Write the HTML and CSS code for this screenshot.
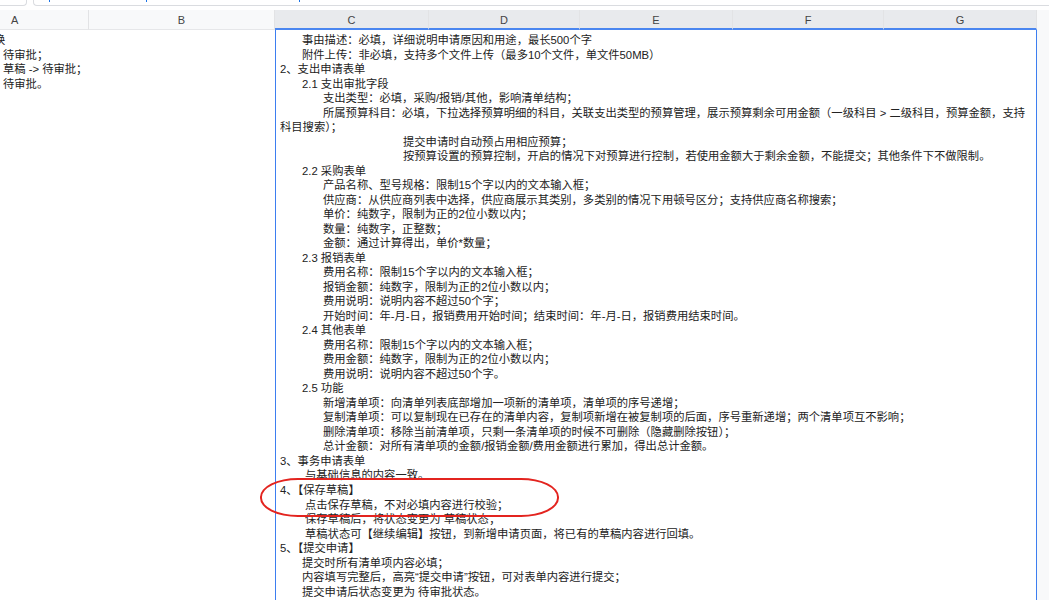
FILE: index.html
```html
<!DOCTYPE html>
<html lang="zh-CN">
<head>
    <meta charset="UTF-8">
    <meta name="viewport" content="width=device-width, initial-scale=1.0">
    <title>需求文档</title>
    <link rel="stylesheet" href="styles.css">
</head>
<body>
    <div class="topbar">
        <div class="namebox"></div>
        <div class="formula">
            <i class="tick t1"></i>
            <i class="tick t2"></i>
            <i class="tick t3"></i>
        </div>
    </div>

    <div class="heads">
        <div class="head head-a">A</div>
        <div class="head">B</div>
        <div class="head sel">C</div>
        <div class="head sel">D</div>
        <div class="head sel">E</div>
        <div class="head sel">F</div>
        <div class="head sel">G</div>
        <div class="head-rest"></div>
    </div>

    <div class="sheet">
        <div class="col-ab">
            <div class="ln"><span class="cut">换</span></div>
            <div class="ln">待审批；</div>
            <div class="ln">草稿 -&gt; 待审批；</div>
            <div class="ln">待审批。</div>
        </div>

        <div class="cell">
            <div class="ln l1">事由描述：必填，详细说明申请原因和用途，最长500个字</div>
            <div class="ln l1">附件上传：非必填，支持多个文件上传（最多10个文件，单文件50MB）</div>
            <div class="ln">2、支出申请表单</div>
            <div class="ln l1">2.1 支出审批字段</div>
            <div class="ln l2">支出类型：必填，采购/报销/其他，影响清单结构；</div>
            <div class="ln l2">所属预算科目：必填，下拉选择预算明细的科目，关联支出类型的预算管理，展示预算剩余可用金额（一级科目 &gt; 二级科目，预算金额，支持</div>
            <div class="ln">科目搜索）；</div>
            <div class="ln l3">提交申请时自动预占用相应预算；</div>
            <div class="ln l3">按预算设置的预算控制，开启的情况下对预算进行控制，若使用金额大于剩余金额，不能提交；其他条件下不做限制。</div>
            <div class="ln l1">2.2 采购表单</div>
            <div class="ln l2">产品名称、型号规格：限制15个字以内的文本输入框；</div>
            <div class="ln l2">供应商：从供应商列表中选择，供应商展示其类别，多类别的情况下用顿号区分；支持供应商名称搜索；</div>
            <div class="ln l2">单价：纯数字，限制为正的2位小数以内；</div>
            <div class="ln l2">数量：纯数字，正整数；</div>
            <div class="ln l2">金额：通过计算得出，单价*数量；</div>
            <div class="ln l1">2.3 报销表单</div>
            <div class="ln l2">费用名称：限制15个字以内的文本输入框；</div>
            <div class="ln l2">报销金额：纯数字，限制为正的2位小数以内；</div>
            <div class="ln l2">费用说明：说明内容不超过50个字；</div>
            <div class="ln l2">开始时间：年-月-日，报销费用开始时间；结束时间：年-月-日，报销费用结束时间。</div>
            <div class="ln l1">2.4 其他表单</div>
            <div class="ln l2">费用名称：限制15个字以内的文本输入框；</div>
            <div class="ln l2">费用金额：纯数字，限制为正的2位小数以内；</div>
            <div class="ln l2">费用说明：说明内容不超过50个字。</div>
            <div class="ln l1">2.5 功能</div>
            <div class="ln l2">新增清单项：向清单列表底部增加一项新的清单项，清单项的序号递增；</div>
            <div class="ln l2">复制清单项：可以复制现在已存在的清单内容，复制项新增在被复制项的后面，序号重新递增；两个清单项互不影响；</div>
            <div class="ln l2">删除清单项：移除当前清单项，只剩一条清单项的时候不可删除（隐藏删除按钮）；</div>
            <div class="ln l2">总计金额：对所有清单项的金额/报销金额/费用金额进行累加，得出总计金额。</div>
            <div class="ln">3、事务申请表单</div>
            <div class="ln l1b">与基础信息的内容一致。</div>
            <div class="ln">4、【保存草稿】</div>
            <div class="ln l1b">点击保存草稿，不对必填内容进行校验；</div>
            <div class="ln l1b">保存草稿后，将状态变更为 草稿状态；</div>
            <div class="ln l1b">草稿状态可【继续编辑】按钮，到新增申请页面，将已有的草稿内容进行回填。</div>
            <div class="ln">5、【提交申请】</div>
            <div class="ln l1">提交时所有清单项内容必填；</div>
            <div class="ln l1">内容填写完整后，高亮“提交申请”按钮，可对表单内容进行提交；</div>
            <div class="ln l1">提交申请后状态变更为 待审批状态。</div>
        </div>

        <div class="col-rest"></div>

        <!-- red annotation ring drawn over the sheet -->
        <div class="ring"></div>
    </div>
</body>
</html>
```

FILE: styles.css
```css
body {
    margin: 0;
    width: 1049px;
    height: 600px;
    overflow: hidden;
    background: #fff;
    font-family: "Liberation Sans", "Noto Sans CJK SC", sans-serif;
    color: #222;
}

/* formula bar, only its bottom edge shows */
.topbar {
    display: flex;
    height: 6px;
    gap: 6px;
    margin-bottom: 4px;
}
.namebox {
    width: 26px;
    border-right: 1px solid #dadce0;
    border-bottom: 1px solid #dadce0;
    border-bottom-right-radius: 4px;
}
.formula {
    flex: 1;
    position: relative;
    border-left: 1px solid #dadce0;
    border-bottom: 1px solid #dadce0;
    border-bottom-left-radius: 4px;
}
.tick {
    position: absolute;
    top: 0;
    width: 1px;
    height: 2px;
    background: #1a73e8;
}
.t1 { left: 15px; }
.t2 { left: 112px; }
.t3 { left: 265px; }

/* column headers */
.heads {
    display: grid;
    grid-template-columns: 89px 186px 154px 151px 153px 151px 153px 1fr;
    height: 20px;
    font-size: 11px;
    color: #444;
}
.head {
    display: flex;
    align-items: center;
    justify-content: center;
    background: #f8f9fa;
    border-right: 1px solid #e2e3e5;
    border-bottom: 1px solid #e6e7e9;
    padding-top: 1px;
}
.head-a {
    justify-content: flex-start;
    padding-left: 11px;
}
.head.sel {
    background: #e8eaed;
    border-bottom: 2px solid #4a86f0;
}
.head-rest {
    background: #f8f9fa;
}

/* sheet body */
.sheet {
    position: relative;
    display: flex;
    height: 570px;
    overflow: hidden;
    font-size: 11.3px;
}
.ln {
    line-height: 14.53px;
    height: 14.53px;
    white-space: nowrap;
}
.col-ab {
    width: 275px;
    padding: 3px 0 0 3px;
    box-sizing: border-box;
    overflow: hidden;
}
.cut {
    margin-left: -9px;
}
.cell {
    width: 762px;
    box-sizing: border-box;
    border-left: 1px solid #3d7ef0;
    border-right: 1px solid #3d7ef0;
    padding: 3px 0 0 4px;
    overflow: hidden;
}
.l1 { text-indent: 22px; }
.l1b { text-indent: 25px; }
.l2 { text-indent: 43px; }
.l3 { text-indent: 123px; }

.col-rest {
    flex: 1;
    background: #f8f9fa;
}

.ring {
    position: absolute;
    left: 260px;
    top: 448px;
    width: 299px;
    height: 39px;
    box-sizing: border-box;
    border: 2px solid #e3241f;
    border-radius: 38px / 19px;
}
```
